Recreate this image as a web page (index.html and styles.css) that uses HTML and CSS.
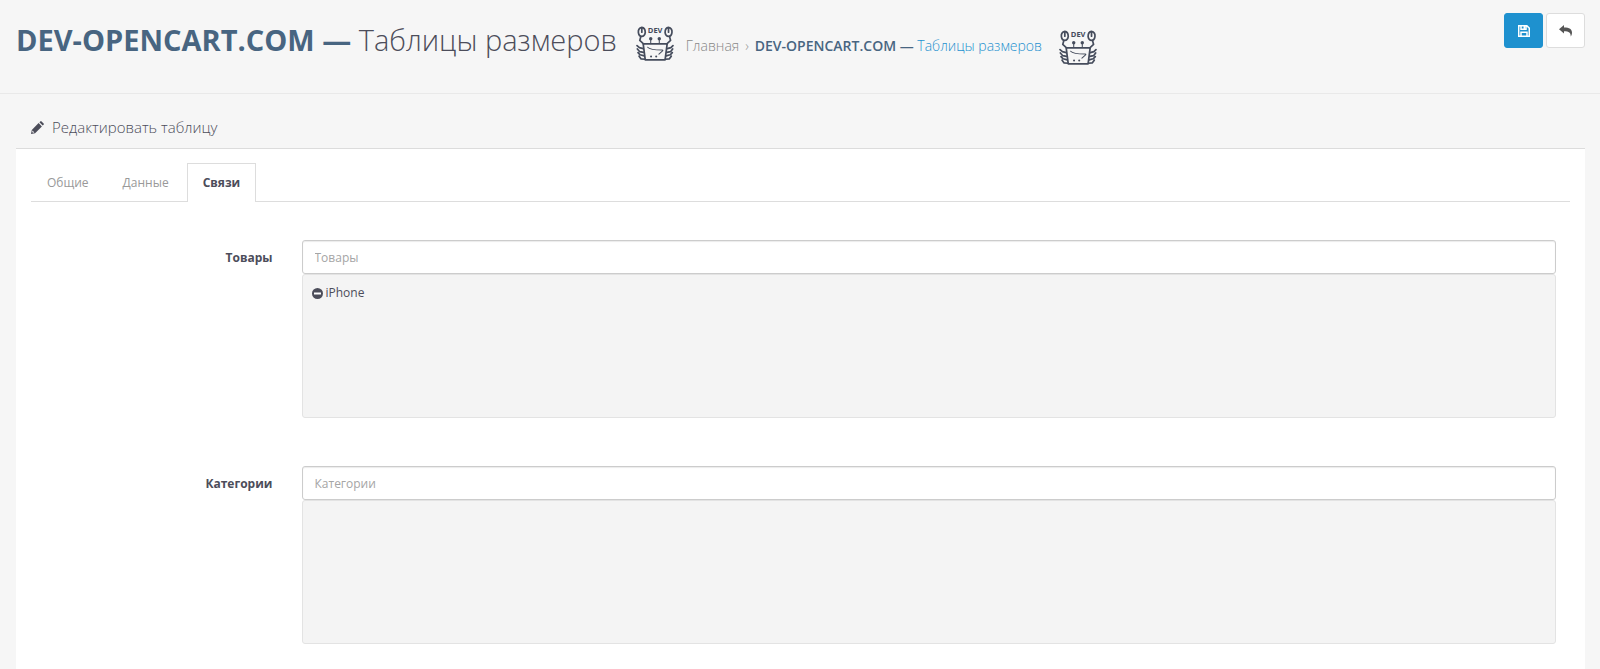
FILE: index.html
```html
<!DOCTYPE html>
<html lang="ru">
<head>
    <meta charset="UTF-8">
    <meta name="viewport" content="width=device-width, initial-scale=1.0">
    <title>Таблицы размеров</title>
    <link rel="stylesheet" href="styles.css">
</head>
<body>
    <header class="page-header">
        <div class="heading">
            <h1><b>DEV-OPENCART.COM —</b> Таблицы размеров</h1>
            <svg class="crab" viewBox="0 0 111 105">
                <g class="crab-lines">
                    <path d="M17 4C9 5 6 12 7 19c1 7 5 11 10 11s9-5 10-11c0-7-3-14-10-15zM17 5v13"/>
                    <path d="M95 4c8 1 11 8 10 15-1 7-5 11-10 11s-9-5-10-11c0-7 3-14 10-15zM95 5v13"/>
                    <path d="M14 31L11 42L22 52M98 31l3 11l-11 10"/>
                    <path d="M21 52H91L85 99H27z"/>
                    <path d="M43 38V51M68 38V51" stroke-width="3"/>
                    <path d="M21 66L10 63L3 57M22 77L11 75L4 67M24 87L12 84L6 78M26 97L15 96L9 88"/>
                    <path d="M91 66l11-3l6-6M90 77l11-2l6-8M88 87l12-3l6-6M86 97l11-1l6-8"/>
                    <path d="M34 62C40 69 51 70 76 70Q81 70 76 74L67 82" stroke-width="3"/>
                </g>
                <circle cx="43" cy="37" r="5"/>
                <circle cx="68" cy="37" r="5"/>
                <circle cx="44" cy="89" r="3"/>
                <circle cx="59" cy="89" r="3"/>
                <text x="56" y="21" text-anchor="middle">DEV</text>
            </svg>
        </div>
        <nav class="breadcrumb">
            <a href="#">Главная</a>
            <span class="separator">›</span>
            <a href="#" class="current"><b>DEV-OPENCART.COM —</b> Таблицы размеров</a>
            <svg class="crab" viewBox="0 0 111 105">
                <g class="crab-lines">
                    <path d="M17 4C9 5 6 12 7 19c1 7 5 11 10 11s9-5 10-11c0-7-3-14-10-15zM17 5v13"/>
                    <path d="M95 4c8 1 11 8 10 15-1 7-5 11-10 11s-9-5-10-11c0-7 3-14 10-15zM95 5v13"/>
                    <path d="M14 31L11 42L22 52M98 31l3 11l-11 10"/>
                    <path d="M21 52H91L85 99H27z"/>
                    <path d="M43 38V51M68 38V51" stroke-width="3"/>
                    <path d="M21 66L10 63L3 57M22 77L11 75L4 67M24 87L12 84L6 78M26 97L15 96L9 88"/>
                    <path d="M91 66l11-3l6-6M90 77l11-2l6-8M88 87l12-3l6-6M86 97l11-1l6-8"/>
                    <path d="M34 62C40 69 51 70 76 70Q81 70 76 74L67 82" stroke-width="3"/>
                </g>
                <circle cx="43" cy="37" r="5"/>
                <circle cx="68" cy="37" r="5"/>
                <circle cx="44" cy="89" r="3"/>
                <circle cx="59" cy="89" r="3"/>
                <text x="56" y="21" text-anchor="middle">DEV</text>
            </svg>
        </nav>
        <div class="actions">
            <button type="submit" form="form-table" class="btn btn-primary" aria-label="Сохранить">
                <svg width="12" height="12" viewBox="0 0 12 12" fill="none" stroke="currentColor" stroke-width="1.500">
                    <path d="M.7.7H8.8L11.3 3.2V11.3H.7zM3 1V4.3H8V1M3 11V7.3H9V11M6.3 1.500V3.4"/>
                </svg>
            </button>
            <button type="button" class="btn btn-default" aria-label="Отменить">
                <svg width="14" height="12" viewBox="0 0 14 12" fill="currentColor">
                    <path d="M0 4.2L5 0V2.4C10.500 2.400 13 4.200 13 7.500C13 9.200 12.500 10.500 11.700 11.500C12 7.800 10 6.200 5 6.200V8.500z"/>
                </svg>
            </button>
        </div>
    </header>

    <main class="panel">
        <div class="panel-heading">
            <svg width="13" height="13" viewBox="0 0 13 13" fill="currentColor">
                <path fill-rule="evenodd" d="M0 13L.8 8.900L7.600 2.100L10.900 5.400L4.100 12.200zM1.500 9.600L1.200 11L2 11.800L3.400 11.500L1.500 9.600zM8.400 1.300L9.300.4Q9.900-.2 10.600.4L12.600 2.400Q13.200 3.100 12.600 3.700L11.700 4.600z"/>
            </svg>
            <h2>Редактировать таблицу</h2>
        </div>
        <div class="panel-body">
            <ul class="tabs">
                <li><a href="#">Общие</a></li>
                <li><a href="#">Данные</a></li>
                <li><a href="#" class="active">Связи</a></li>
            </ul>
            <form id="form-table">
                <div class="form-group">
                    <label for="products">Товары</label>
                    <div class="field">
                        <input type="text" id="products" placeholder="Товары">
                        <div class="well">
                            <div class="item">
                                <svg width="11" height="11" viewBox="0 0 11 11">
                                    <circle cx="5.500" cy="5.500" r="5.500" fill="currentColor"/>
                                    <path d="M2 4.500H9V6.500H2z" fill="#fff"/>
                                </svg>
                                iPhone
                            </div>
                        </div>
                    </div>
                </div>
                <div class="form-group">
                    <label for="categories">Категории</label>
                    <div class="field">
                        <input type="text" id="categories" placeholder="Категории">
                        <div class="well"></div>
                    </div>
                </div>
            </form>
        </div>
    </main>
</body>
</html>
```

FILE: styles.css
```css
* {
    margin: 0;
    padding: 0;
    box-sizing: border-box;
}

body {
    font-family: 'Open Sans', sans-serif;
    font-size: 12px;
    line-height: 18px;
    color: #4c4d5a;
    background-color: #f6f6f6;
}

a {
    text-decoration: none;
}

/* Шапка */
.page-header {
    display: flex;
    align-items: flex-start;
    height: 94px;
    padding: 13px 15px 0 16px;
    border-bottom: 1px solid #e9e9e9;
}

.heading {
    display: flex;
    align-items: center;
    gap: 19px;
    padding-top: 5px;
}

h1 {
    font-size: 29px;
    line-height: 40px;
    font-weight: 300;
}

.page-header b {
    font-weight: 700;
    color: #486581;
}

/* Логотип */
.crab {
    width: 38px;
    height: 36px;
    margin-top: 8px;
    flex: none;
    fill: #454c5c;
}

.crab-lines {
    fill: none;
    stroke: #454c5c;
    stroke-width: 5;
    stroke-linecap: round;
    stroke-linejoin: round;
}

.crab text {
    font-size: 22px;
    font-weight: 700;
}

.breadcrumb {
    display: flex;
    align-items: center;
    padding: 13px 0 0 12px;
    font-size: 14px;
    font-weight: 300;
}

.breadcrumb a {
    color: #888;
}

.breadcrumb a.current {
    color: #1e91cf;
}

.breadcrumb b {
    font-weight: 600;
}

.breadcrumb .separator {
    padding: 0 6px;
    color: #999;
}

.breadcrumb .crab {
    margin: 4px 0 0 17px;
}

.actions {
    display: flex;
    gap: 3px;
    margin-left: auto;
}

.btn {
    display: flex;
    align-items: center;
    justify-content: center;
    width: 39px;
    height: 35px;
    border: 1px solid #ddd;
    border-radius: 3px;
    background-color: #fff;
    color: #555;
    cursor: pointer;
}

.btn-primary {
    border-color: #1e91cf;
    background-color: #1e91cf;
    color: #fff;
}

/* Панель */
.panel {
    margin: 14px 15px 0 16px;
    background-color: #fff;
}

.panel-heading {
    display: flex;
    align-items: center;
    gap: 8px;
    height: 41px;
    padding: 0 15px 2px;
    border-bottom: 1px solid #dcdcdc;
    background-color: #f6f6f6;
}

h2 {
    font-size: 15px;
    font-weight: 300;
}

.panel-body {
    padding: 14px 15px 15px;
}

.tabs {
    display: flex;
    gap: 2px;
    list-style: none;
    border-bottom: 1px solid #ddd;
}

.tabs a {
    display: block;
    padding: 10px 15px;
    margin-bottom: -1px;
    border: 1px solid transparent;
    border-bottom: none;
    color: #999;
}

.tabs a.active {
    font-weight: 700;
    color: #4c4d5a;
    border-color: #ddd;
    background-color: #fff;
}

/* Форма */
.form-group {
    display: grid;
    grid-template-columns: 2fr 10fr;
    padding-top: 38px;
    padding-bottom: 10px;
}

label {
    padding: 9px 15px;
    text-align: right;
    font-weight: 700;
}

.field {
    padding: 0 14px;
}

input {
    display: block;
    width: 100%;
    height: 34px;
    padding: 0 12px;
    font: inherit;
    color: #555;
    border: 1px solid #ccc;
    border-radius: 3px;
    background-color: #fff;
    box-shadow: inset 0 1px 1px rgba(0, 0, 0, 0.08);
}

input::placeholder {
    color: #a5a5a5;
}

.well {
    height: 144px;
    padding: 9px;
    border: 1px solid #e3e3e3;
    border-radius: 3px;
    background-color: #f4f4f4;
}

.item {
    display: flex;
    align-items: center;
    gap: 3px;
}
```
